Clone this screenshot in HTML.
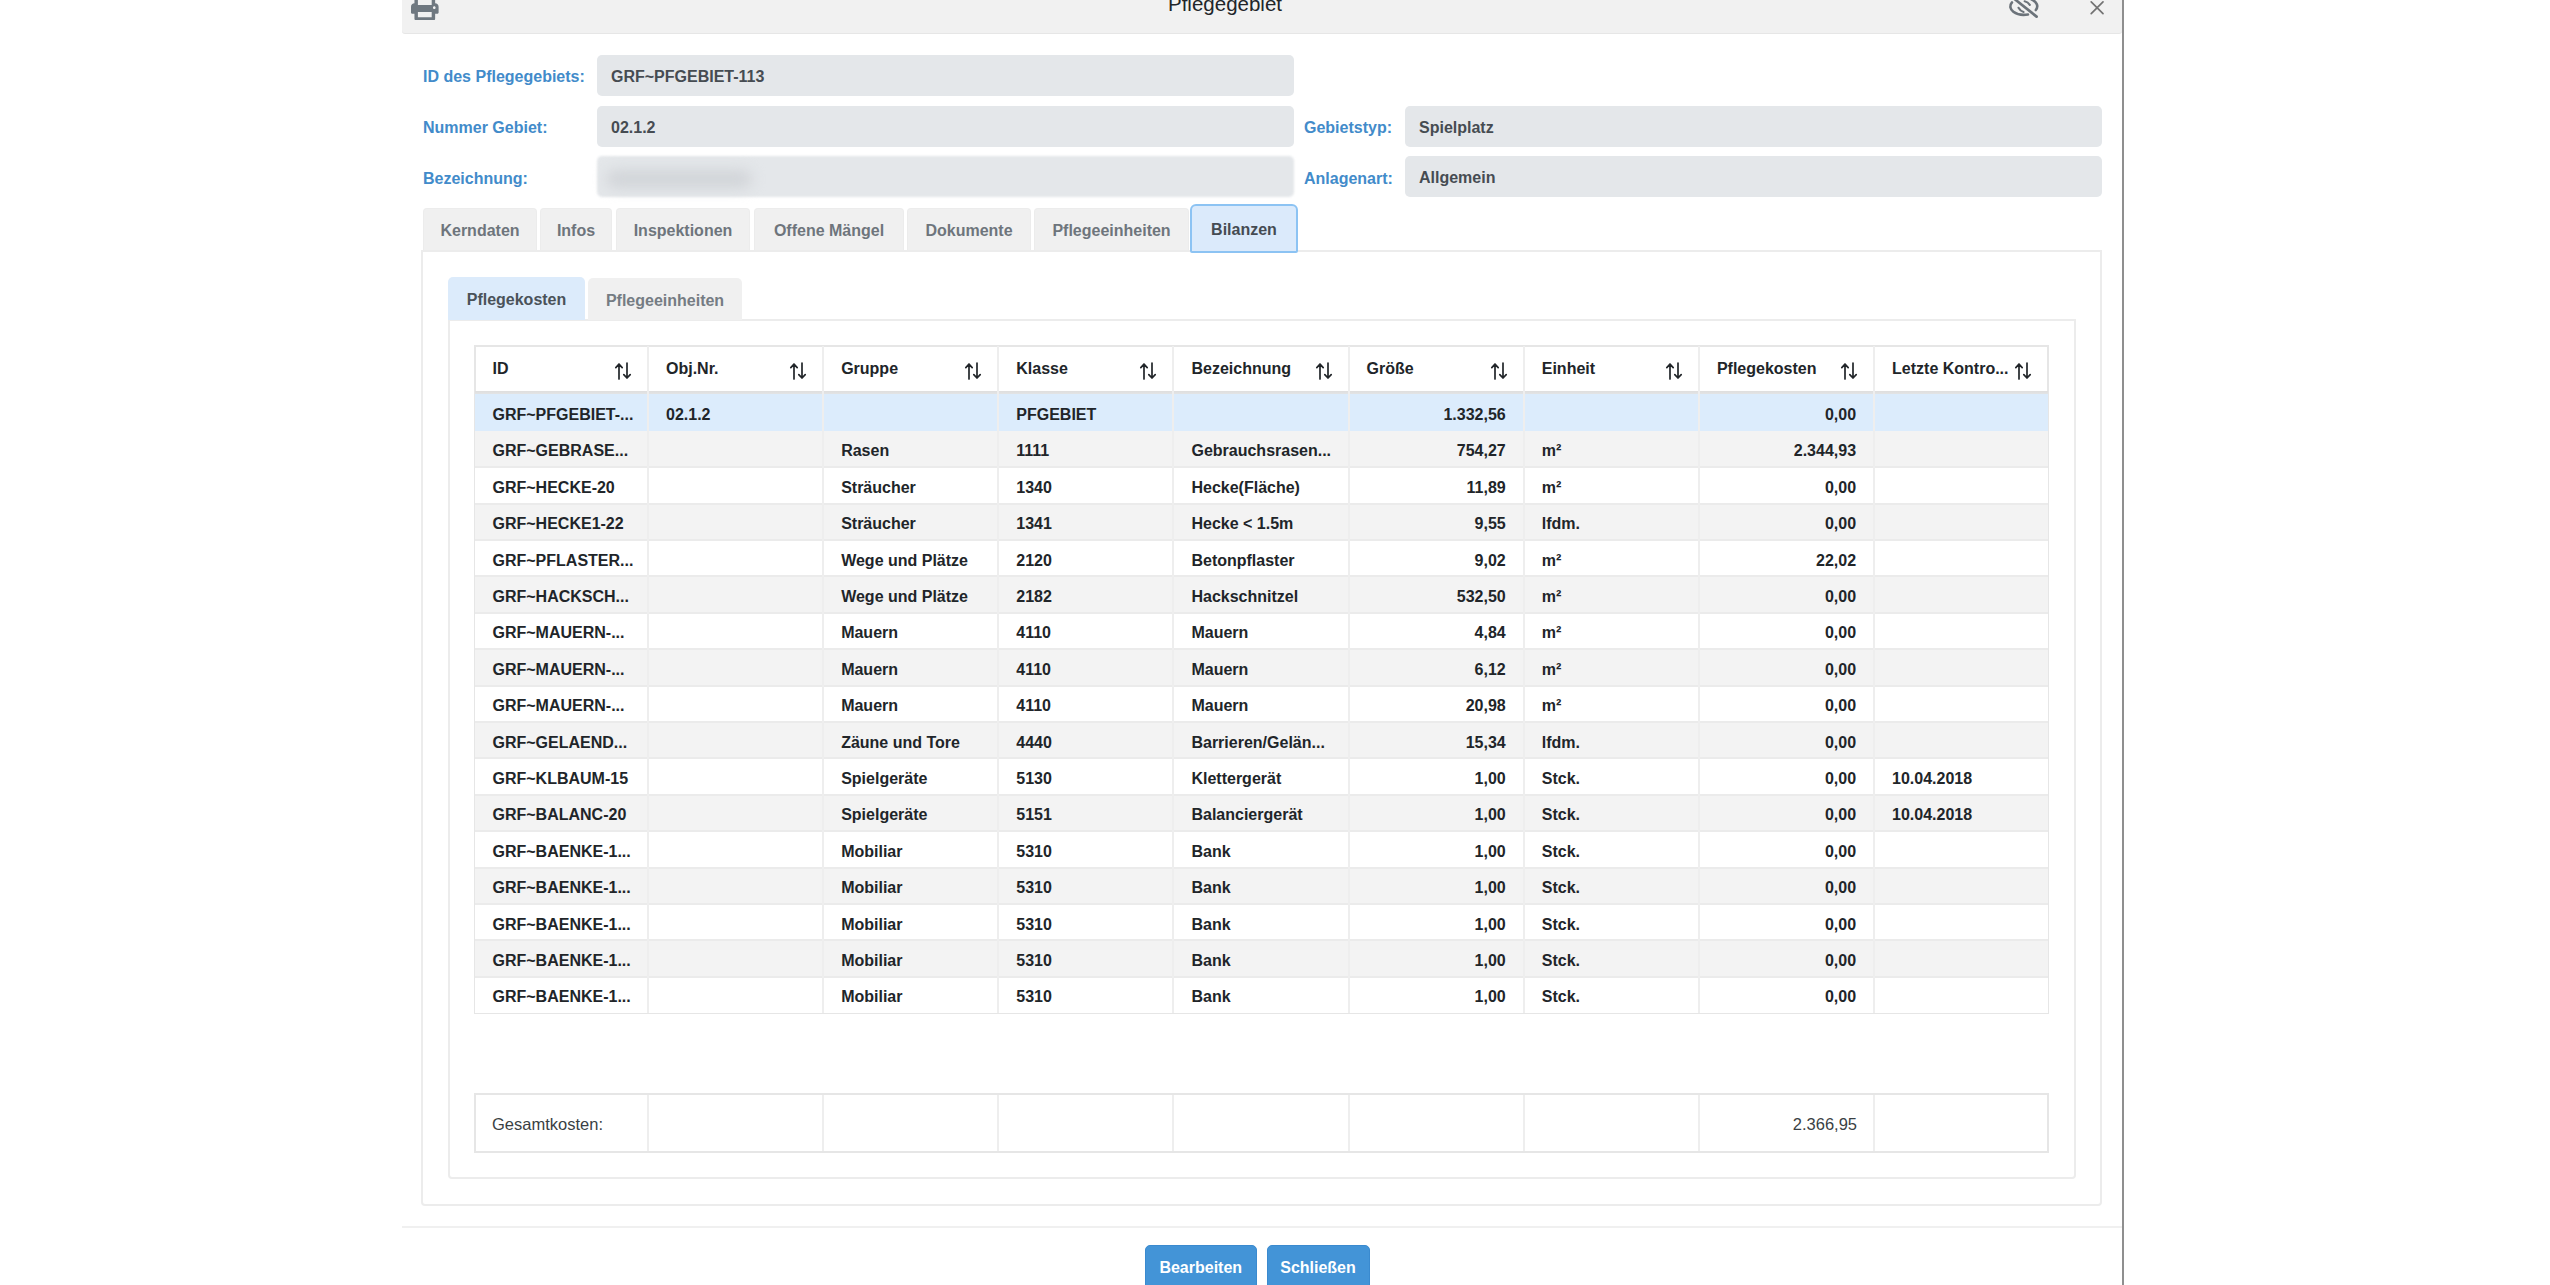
<!DOCTYPE html>
<html><head><meta charset="utf-8"><style>
*{box-sizing:border-box;margin:0;padding:0}
html,body{width:2550px;height:1285px;overflow:hidden;background:#fff;font-family:"Liberation Sans",sans-serif;position:relative}
.abs{position:absolute}
#hdr{position:absolute;left:402px;top:-6px;width:1720px;height:39px;background:#f1f1f1;border-radius:0 0 3px 3px;box-shadow:0 1px 0 #e6e6e6}
#title{position:absolute;left:1168px;top:-8px;font-size:20.5px;color:#212529;white-space:nowrap}
#vbar{position:absolute;left:2122px;top:0;width:1.6px;height:1285px;background:#8f8f8f}
.lbl{position:absolute;margin-top:1px;font-size:16px;font-weight:700;color:#428bca;white-space:nowrap}
.inp{position:absolute;height:41px;background:#e4e7ea;border-radius:5px;font-size:16px;font-weight:700;color:#464c52;padding-left:14px;line-height:43px;white-space:nowrap}
.tab{position:absolute;top:208px;height:42px;background:#f0f0f0;border-radius:4px 4px 0 0;font-size:16px;font-weight:700;color:#6e757c;line-height:43px;text-align:center;white-space:nowrap;border:1px solid #ececec;border-bottom:none}
.tab.act{top:204px;height:49px;background:#dbeafb;border:2px solid #8cc3f3;border-radius:6px 6px 2px 2px;color:#454b52;line-height:47px}
#panel{position:absolute;left:421px;top:250px;width:1681px;height:956px;border:2px solid #ececec;border-radius:0 0 4px 4px}
.itab{position:absolute;height:43px;background:#f0f0f0;border-radius:5px 5px 0 0;font-size:16px;font-weight:700;color:#757c83;line-height:45px;text-align:center;white-space:nowrap}
.itab.act{background:#dcebfb;color:#4a5259}
#ipanel{position:absolute;left:448px;top:319px;width:1628px;height:860px;border:2px solid #ececec;border-top:2px solid #ececec;border-radius:0 0 4px 4px}
#tbl{position:absolute;left:474px;top:345px;width:1575px;height:669px;border:2px solid #e6e6e6}
.th{position:absolute;top:346px;height:46px;font-size:16px;font-weight:700;color:#212529;white-space:nowrap}
.tht{position:absolute;left:18px;top:13.5px}
.sort{position:absolute;right:16px;top:16px;width:18px;height:18px}
#hbot{position:absolute;left:475px;top:391px;width:1573px;height:4px;background:linear-gradient(#dedede,#e4e6e8)}
.tr{position:absolute;left:475px;width:1573px;height:36.4px}
.tr.sel{background:#dcecfc;height:37.4px}
.tr.odd{background:#f3f3f3}
.tr.even{background:#fff}
.td{position:absolute;height:36.4px;line-height:41.8px;font-size:16px;font-weight:700;color:#212529;white-space:nowrap;padding-left:18px}
.td.r{text-align:right;padding-left:0;padding-right:18px}
.vl{position:absolute;width:2px;background:#eeeeee}
.hl{position:absolute;left:475px;width:1573px;height:2px;background:#ebebeb}
#ftbl{position:absolute;left:474px;top:1093px;width:1575px;height:60px;border:2px solid #e6e6e6}
.ft{position:absolute;top:1094px;height:58px;line-height:61px;font-size:16.5px;color:#3a3f44;white-space:nowrap}
#fline{position:absolute;left:402px;top:1226px;width:1720px;height:2px;background:#f0f0f0}
.btn{position:absolute;top:1244.7px;height:46px;background:#4394d7;border:1px solid #3a8acf;border-radius:5px;color:#fff;font-size:16px;font-weight:700;text-align:center;line-height:43.6px}
</style></head><body>
<div id="hdr"></div>
<div id="title">Pflegegebiet</div>
<svg class="abs" style="left:411px;top:-7.2px" width="27.6" height="27.6" viewBox="0 0 512 512"><path fill="#6f7880" d="M448 192V77.25c0-8.49-3.37-16.62-9.37-22.63L393.37 9.37c-6-6-14.14-9.37-22.63-9.37H96C78.33 0 64 14.33 64 32v160c-35.35 0-64 28.650-64 64v112c0 8.84 7.16 16 16 16h48v96c0 17.67 14.33 32 32 32h320c17.67 0 32-14.330 32-32v-96h48c8.84 0 16-7.16 16-16V256c0-35.35-28.65-64-64-64zm-64 256H128v-96h256v96zm0-224H128V64h192v48c0 8.84 7.16 16 16 16h48v96zm48 72c-13.25 0-24-10.75-24-24 0-13.26 10.75-24 24-24s24 10.74 24 24c0 13.25-10.75 24-24 24z"/></svg>
<svg class="abs" style="left:2000px;top:-5px" width="45" height="28" viewBox="2000 -5 45 28"><g fill="none" stroke="#6c737a" stroke-linecap="round">
<path d="M2012 2.4A13.8 8.4 0 0 0 2028 14.5" stroke-width="2.6"/>
<path d="M2031.4 -0.6A13.8 8.4 0 0 1 2035.8 10" stroke-width="2.6"/>
<path d="M2018.5 7.8A8 8 0 0 0 2023.6 11.9" stroke-width="2.1"/>
<path d="M2024.6 1.2A8 8 0 0 1 2029.8 4.9" stroke-width="2.1"/>
<path d="M2014.5 -1L2036.6 16.6" stroke-width="2.7"/>
</g></svg>
<svg class="abs" style="left:2085px;top:-4px" width="24" height="24" viewBox="2085 -4 24 24"><path d="M2091.2 1.8L2103 13.6M2103 1.8L2091.2 13.6" stroke="#737373" stroke-width="1.7" stroke-linecap="round"/></svg>
<div id="vbar"></div>

<div class="lbl" style="left:423px;top:67px">ID des Pflegegebiets:</div>
<div class="inp" style="left:597px;top:55px;width:697px">GRF~PFGEBIET-113</div>
<div class="lbl" style="left:423px;top:118px">Nummer Gebiet:</div>
<div class="inp" style="left:597px;top:106px;width:697px">02.1.2</div>
<div class="lbl" style="left:423px;top:169px">Bezeichnung:</div>
<div class="inp" style="left:597px;top:156px;width:697px;filter:blur(1.2px)"></div><div class="abs" style="left:606px;top:170px;width:146px;height:18px;background:#d1d4d8;border-radius:9px;filter:blur(7px)"></div>
<div class="lbl" style="left:1304px;top:118px">Gebietstyp:</div>
<div class="inp" style="left:1405px;top:106px;width:697px">Spielplatz</div>
<div class="lbl" style="left:1304px;top:169px">Anlagenart:</div>
<div class="inp" style="left:1405px;top:156px;width:697px">Allgemein</div>

<div id="panel"></div>
<div class="tab" style="left:423px;width:114px">Kerndaten</div>
<div class="tab" style="left:540px;width:72px">Infos</div>
<div class="tab" style="left:616px;width:134px">Inspektionen</div>
<div class="tab" style="left:754px;width:150px">Offene Mängel</div>
<div class="tab" style="left:907px;width:124px">Dokumente</div>
<div class="tab" style="left:1034px;width:155px">Pflegeeinheiten</div>
<div class="tab act" style="left:1190px;width:108px">Bilanzen</div>

<div id="ipanel"></div>
<div class="itab act" style="left:448px;top:277px;width:137px">Pflegekosten</div>
<div class="itab" style="left:588px;top:278px;width:154px;height:42px">Pflegeeinheiten</div>

<div id="tbl"></div>
<div class="th" style="left:474.5px;width:173.5px"><span class="tht">ID</span><span class="sort"><svg width="18" height="18" viewBox="0 0 18 18"><path d="M5 17V2M1.8 5.6L5 2.2l3.2 3.4M13 1v15M9.8 12.6L13 16l3.2-3.4" fill="none" stroke="#212529" stroke-width="1.7" stroke-linecap="round" stroke-linejoin="round"/></svg></span></div><div class="th" style="left:648.0px;width:175.14999999999998px"><span class="tht">Obj.Nr.</span><span class="sort"><svg width="18" height="18" viewBox="0 0 18 18"><path d="M5 17V2M1.8 5.6L5 2.2l3.2 3.4M13 1v15M9.8 12.6L13 16l3.2-3.4" fill="none" stroke="#212529" stroke-width="1.7" stroke-linecap="round" stroke-linejoin="round"/></svg></span></div><div class="th" style="left:823.15px;width:175.14999999999998px"><span class="tht">Gruppe</span><span class="sort"><svg width="18" height="18" viewBox="0 0 18 18"><path d="M5 17V2M1.8 5.6L5 2.2l3.2 3.4M13 1v15M9.8 12.6L13 16l3.2-3.4" fill="none" stroke="#212529" stroke-width="1.7" stroke-linecap="round" stroke-linejoin="round"/></svg></span></div><div class="th" style="left:998.3px;width:175.1500000000001px"><span class="tht">Klasse</span><span class="sort"><svg width="18" height="18" viewBox="0 0 18 18"><path d="M5 17V2M1.8 5.6L5 2.2l3.2 3.4M13 1v15M9.8 12.6L13 16l3.2-3.4" fill="none" stroke="#212529" stroke-width="1.7" stroke-linecap="round" stroke-linejoin="round"/></svg></span></div><div class="th" style="left:1173.45px;width:175.14999999999986px"><span class="tht">Bezeichnung</span><span class="sort"><svg width="18" height="18" viewBox="0 0 18 18"><path d="M5 17V2M1.8 5.6L5 2.2l3.2 3.4M13 1v15M9.8 12.6L13 16l3.2-3.4" fill="none" stroke="#212529" stroke-width="1.7" stroke-linecap="round" stroke-linejoin="round"/></svg></span></div><div class="th" style="left:1348.6px;width:175.1500000000001px"><span class="tht">Größe</span><span class="sort"><svg width="18" height="18" viewBox="0 0 18 18"><path d="M5 17V2M1.8 5.6L5 2.2l3.2 3.4M13 1v15M9.8 12.6L13 16l3.2-3.4" fill="none" stroke="#212529" stroke-width="1.7" stroke-linecap="round" stroke-linejoin="round"/></svg></span></div><div class="th" style="left:1523.75px;width:175.1500000000001px"><span class="tht">Einheit</span><span class="sort"><svg width="18" height="18" viewBox="0 0 18 18"><path d="M5 17V2M1.8 5.6L5 2.2l3.2 3.4M13 1v15M9.8 12.6L13 16l3.2-3.4" fill="none" stroke="#212529" stroke-width="1.7" stroke-linecap="round" stroke-linejoin="round"/></svg></span></div><div class="th" style="left:1698.9px;width:175.14999999999986px"><span class="tht">Pflegekosten</span><span class="sort"><svg width="18" height="18" viewBox="0 0 18 18"><path d="M5 17V2M1.8 5.6L5 2.2l3.2 3.4M13 1v15M9.8 12.6L13 16l3.2-3.4" fill="none" stroke="#212529" stroke-width="1.7" stroke-linecap="round" stroke-linejoin="round"/></svg></span></div><div class="th" style="left:1874.05px;width:174.45000000000005px"><span class="tht">Letzte Kontro...</span><span class="sort"><svg width="18" height="18" viewBox="0 0 18 18"><path d="M5 17V2M1.8 5.6L5 2.2l3.2 3.4M13 1v15M9.8 12.6L13 16l3.2-3.4" fill="none" stroke="#212529" stroke-width="1.7" stroke-linecap="round" stroke-linejoin="round"/></svg></span></div>
<div id="hbot"></div>
<div class="tr sel" style="top:394.00px"></div><div class="td" style="left:474.5px;width:173.5px;top:394.00px">GRF~PFGEBIET-...</div><div class="td" style="left:648.0px;width:175.14999999999998px;top:394.00px">02.1.2</div><div class="td" style="left:998.3px;width:175.1500000000001px;top:394.00px">PFGEBIET</div><div class="td r" style="left:1348.6px;width:175.1500000000001px;top:394.00px">1.332,56</div><div class="td r" style="left:1698.9px;width:175.14999999999986px;top:394.00px">0,00</div><div class="tr odd" style="top:431.40px;height:35.4px"></div><div class="td" style="left:474.5px;width:173.5px;top:430.40px">GRF~GEBRASE...</div><div class="td" style="left:823.15px;width:175.14999999999998px;top:430.40px">Rasen</div><div class="td" style="left:998.3px;width:175.1500000000001px;top:430.40px">1111</div><div class="td" style="left:1173.45px;width:175.14999999999986px;top:430.40px">Gebrauchsrasen...</div><div class="td r" style="left:1348.6px;width:175.1500000000001px;top:430.40px">754,27</div><div class="td" style="left:1523.75px;width:175.1500000000001px;top:430.40px">m²</div><div class="td r" style="left:1698.9px;width:175.14999999999986px;top:430.40px">2.344,93</div><div class="tr even" style="top:466.80px"></div><div class="td" style="left:474.5px;width:173.5px;top:466.80px">GRF~HECKE-20</div><div class="td" style="left:823.15px;width:175.14999999999998px;top:466.80px">Sträucher</div><div class="td" style="left:998.3px;width:175.1500000000001px;top:466.80px">1340</div><div class="td" style="left:1173.45px;width:175.14999999999986px;top:466.80px">Hecke(Fläche)</div><div class="td r" style="left:1348.6px;width:175.1500000000001px;top:466.80px">11,89</div><div class="td" style="left:1523.75px;width:175.1500000000001px;top:466.80px">m²</div><div class="td r" style="left:1698.9px;width:175.14999999999986px;top:466.80px">0,00</div><div class="tr odd" style="top:503.20px"></div><div class="td" style="left:474.5px;width:173.5px;top:503.20px">GRF~HECKE1-22</div><div class="td" style="left:823.15px;width:175.14999999999998px;top:503.20px">Sträucher</div><div class="td" style="left:998.3px;width:175.1500000000001px;top:503.20px">1341</div><div class="td" style="left:1173.45px;width:175.14999999999986px;top:503.20px">Hecke &lt; 1.5m</div><div class="td r" style="left:1348.6px;width:175.1500000000001px;top:503.20px">9,55</div><div class="td" style="left:1523.75px;width:175.1500000000001px;top:503.20px">lfdm.</div><div class="td r" style="left:1698.9px;width:175.14999999999986px;top:503.20px">0,00</div><div class="tr even" style="top:539.60px"></div><div class="td" style="left:474.5px;width:173.5px;top:539.60px">GRF~PFLASTER...</div><div class="td" style="left:823.15px;width:175.14999999999998px;top:539.60px">Wege und Plätze</div><div class="td" style="left:998.3px;width:175.1500000000001px;top:539.60px">2120</div><div class="td" style="left:1173.45px;width:175.14999999999986px;top:539.60px">Betonpflaster</div><div class="td r" style="left:1348.6px;width:175.1500000000001px;top:539.60px">9,02</div><div class="td" style="left:1523.75px;width:175.1500000000001px;top:539.60px">m²</div><div class="td r" style="left:1698.9px;width:175.14999999999986px;top:539.60px">22,02</div><div class="tr odd" style="top:576.00px"></div><div class="td" style="left:474.5px;width:173.5px;top:576.00px">GRF~HACKSCH...</div><div class="td" style="left:823.15px;width:175.14999999999998px;top:576.00px">Wege und Plätze</div><div class="td" style="left:998.3px;width:175.1500000000001px;top:576.00px">2182</div><div class="td" style="left:1173.45px;width:175.14999999999986px;top:576.00px">Hackschnitzel</div><div class="td r" style="left:1348.6px;width:175.1500000000001px;top:576.00px">532,50</div><div class="td" style="left:1523.75px;width:175.1500000000001px;top:576.00px">m²</div><div class="td r" style="left:1698.9px;width:175.14999999999986px;top:576.00px">0,00</div><div class="tr even" style="top:612.40px"></div><div class="td" style="left:474.5px;width:173.5px;top:612.40px">GRF~MAUERN-...</div><div class="td" style="left:823.15px;width:175.14999999999998px;top:612.40px">Mauern</div><div class="td" style="left:998.3px;width:175.1500000000001px;top:612.40px">4110</div><div class="td" style="left:1173.45px;width:175.14999999999986px;top:612.40px">Mauern</div><div class="td r" style="left:1348.6px;width:175.1500000000001px;top:612.40px">4,84</div><div class="td" style="left:1523.75px;width:175.1500000000001px;top:612.40px">m²</div><div class="td r" style="left:1698.9px;width:175.14999999999986px;top:612.40px">0,00</div><div class="tr odd" style="top:648.80px"></div><div class="td" style="left:474.5px;width:173.5px;top:648.80px">GRF~MAUERN-...</div><div class="td" style="left:823.15px;width:175.14999999999998px;top:648.80px">Mauern</div><div class="td" style="left:998.3px;width:175.1500000000001px;top:648.80px">4110</div><div class="td" style="left:1173.45px;width:175.14999999999986px;top:648.80px">Mauern</div><div class="td r" style="left:1348.6px;width:175.1500000000001px;top:648.80px">6,12</div><div class="td" style="left:1523.75px;width:175.1500000000001px;top:648.80px">m²</div><div class="td r" style="left:1698.9px;width:175.14999999999986px;top:648.80px">0,00</div><div class="tr even" style="top:685.20px"></div><div class="td" style="left:474.5px;width:173.5px;top:685.20px">GRF~MAUERN-...</div><div class="td" style="left:823.15px;width:175.14999999999998px;top:685.20px">Mauern</div><div class="td" style="left:998.3px;width:175.1500000000001px;top:685.20px">4110</div><div class="td" style="left:1173.45px;width:175.14999999999986px;top:685.20px">Mauern</div><div class="td r" style="left:1348.6px;width:175.1500000000001px;top:685.20px">20,98</div><div class="td" style="left:1523.75px;width:175.1500000000001px;top:685.20px">m²</div><div class="td r" style="left:1698.9px;width:175.14999999999986px;top:685.20px">0,00</div><div class="tr odd" style="top:721.60px"></div><div class="td" style="left:474.5px;width:173.5px;top:721.60px">GRF~GELAEND...</div><div class="td" style="left:823.15px;width:175.14999999999998px;top:721.60px">Zäune und Tore</div><div class="td" style="left:998.3px;width:175.1500000000001px;top:721.60px">4440</div><div class="td" style="left:1173.45px;width:175.14999999999986px;top:721.60px">Barrieren/Gelän...</div><div class="td r" style="left:1348.6px;width:175.1500000000001px;top:721.60px">15,34</div><div class="td" style="left:1523.75px;width:175.1500000000001px;top:721.60px">lfdm.</div><div class="td r" style="left:1698.9px;width:175.14999999999986px;top:721.60px">0,00</div><div class="tr even" style="top:758.00px"></div><div class="td" style="left:474.5px;width:173.5px;top:758.00px">GRF~KLBAUM-15</div><div class="td" style="left:823.15px;width:175.14999999999998px;top:758.00px">Spielgeräte</div><div class="td" style="left:998.3px;width:175.1500000000001px;top:758.00px">5130</div><div class="td" style="left:1173.45px;width:175.14999999999986px;top:758.00px">Klettergerät</div><div class="td r" style="left:1348.6px;width:175.1500000000001px;top:758.00px">1,00</div><div class="td" style="left:1523.75px;width:175.1500000000001px;top:758.00px">Stck.</div><div class="td r" style="left:1698.9px;width:175.14999999999986px;top:758.00px">0,00</div><div class="td" style="left:1874.05px;width:174.45000000000005px;top:758.00px">10.04.2018</div><div class="tr odd" style="top:794.40px"></div><div class="td" style="left:474.5px;width:173.5px;top:794.40px">GRF~BALANC-20</div><div class="td" style="left:823.15px;width:175.14999999999998px;top:794.40px">Spielgeräte</div><div class="td" style="left:998.3px;width:175.1500000000001px;top:794.40px">5151</div><div class="td" style="left:1173.45px;width:175.14999999999986px;top:794.40px">Balanciergerät</div><div class="td r" style="left:1348.6px;width:175.1500000000001px;top:794.40px">1,00</div><div class="td" style="left:1523.75px;width:175.1500000000001px;top:794.40px">Stck.</div><div class="td r" style="left:1698.9px;width:175.14999999999986px;top:794.40px">0,00</div><div class="td" style="left:1874.05px;width:174.45000000000005px;top:794.40px">10.04.2018</div><div class="tr even" style="top:830.80px"></div><div class="td" style="left:474.5px;width:173.5px;top:830.80px">GRF~BAENKE-1...</div><div class="td" style="left:823.15px;width:175.14999999999998px;top:830.80px">Mobiliar</div><div class="td" style="left:998.3px;width:175.1500000000001px;top:830.80px">5310</div><div class="td" style="left:1173.45px;width:175.14999999999986px;top:830.80px">Bank</div><div class="td r" style="left:1348.6px;width:175.1500000000001px;top:830.80px">1,00</div><div class="td" style="left:1523.75px;width:175.1500000000001px;top:830.80px">Stck.</div><div class="td r" style="left:1698.9px;width:175.14999999999986px;top:830.80px">0,00</div><div class="tr odd" style="top:867.20px"></div><div class="td" style="left:474.5px;width:173.5px;top:867.20px">GRF~BAENKE-1...</div><div class="td" style="left:823.15px;width:175.14999999999998px;top:867.20px">Mobiliar</div><div class="td" style="left:998.3px;width:175.1500000000001px;top:867.20px">5310</div><div class="td" style="left:1173.45px;width:175.14999999999986px;top:867.20px">Bank</div><div class="td r" style="left:1348.6px;width:175.1500000000001px;top:867.20px">1,00</div><div class="td" style="left:1523.75px;width:175.1500000000001px;top:867.20px">Stck.</div><div class="td r" style="left:1698.9px;width:175.14999999999986px;top:867.20px">0,00</div><div class="tr even" style="top:903.60px"></div><div class="td" style="left:474.5px;width:173.5px;top:903.60px">GRF~BAENKE-1...</div><div class="td" style="left:823.15px;width:175.14999999999998px;top:903.60px">Mobiliar</div><div class="td" style="left:998.3px;width:175.1500000000001px;top:903.60px">5310</div><div class="td" style="left:1173.45px;width:175.14999999999986px;top:903.60px">Bank</div><div class="td r" style="left:1348.6px;width:175.1500000000001px;top:903.60px">1,00</div><div class="td" style="left:1523.75px;width:175.1500000000001px;top:903.60px">Stck.</div><div class="td r" style="left:1698.9px;width:175.14999999999986px;top:903.60px">0,00</div><div class="tr odd" style="top:940.00px"></div><div class="td" style="left:474.5px;width:173.5px;top:940.00px">GRF~BAENKE-1...</div><div class="td" style="left:823.15px;width:175.14999999999998px;top:940.00px">Mobiliar</div><div class="td" style="left:998.3px;width:175.1500000000001px;top:940.00px">5310</div><div class="td" style="left:1173.45px;width:175.14999999999986px;top:940.00px">Bank</div><div class="td r" style="left:1348.6px;width:175.1500000000001px;top:940.00px">1,00</div><div class="td" style="left:1523.75px;width:175.1500000000001px;top:940.00px">Stck.</div><div class="td r" style="left:1698.9px;width:175.14999999999986px;top:940.00px">0,00</div><div class="tr even" style="top:976.40px"></div><div class="td" style="left:474.5px;width:173.5px;top:976.40px">GRF~BAENKE-1...</div><div class="td" style="left:823.15px;width:175.14999999999998px;top:976.40px">Mobiliar</div><div class="td" style="left:998.3px;width:175.1500000000001px;top:976.40px">5310</div><div class="td" style="left:1173.45px;width:175.14999999999986px;top:976.40px">Bank</div><div class="td r" style="left:1348.6px;width:175.1500000000001px;top:976.40px">1,00</div><div class="td" style="left:1523.75px;width:175.1500000000001px;top:976.40px">Stck.</div><div class="td r" style="left:1698.9px;width:175.14999999999986px;top:976.40px">0,00</div>
<div class="hl" style="top:466.20px"></div><div class="hl" style="top:502.60px"></div><div class="hl" style="top:539.00px"></div><div class="hl" style="top:575.40px"></div><div class="hl" style="top:611.80px"></div><div class="hl" style="top:648.20px"></div><div class="hl" style="top:684.60px"></div><div class="hl" style="top:721.00px"></div><div class="hl" style="top:757.40px"></div><div class="hl" style="top:793.80px"></div><div class="hl" style="top:830.20px"></div><div class="hl" style="top:866.60px"></div><div class="hl" style="top:903.00px"></div><div class="hl" style="top:939.40px"></div><div class="hl" style="top:975.80px"></div>
<div class="vl" style="left:647.0px;top:346px;height:667px"></div><div class="vl" style="left:647.0px;top:1094px;height:58px"></div><div class="vl" style="left:822.15px;top:346px;height:667px"></div><div class="vl" style="left:822.15px;top:1094px;height:58px"></div><div class="vl" style="left:997.3px;top:346px;height:667px"></div><div class="vl" style="left:997.3px;top:1094px;height:58px"></div><div class="vl" style="left:1172.45px;top:346px;height:667px"></div><div class="vl" style="left:1172.45px;top:1094px;height:58px"></div><div class="vl" style="left:1347.6px;top:346px;height:667px"></div><div class="vl" style="left:1347.6px;top:1094px;height:58px"></div><div class="vl" style="left:1522.75px;top:346px;height:667px"></div><div class="vl" style="left:1522.75px;top:1094px;height:58px"></div><div class="vl" style="left:1697.9px;top:346px;height:667px"></div><div class="vl" style="left:1697.9px;top:1094px;height:58px"></div><div class="vl" style="left:1873.05px;top:346px;height:667px"></div><div class="vl" style="left:1873.05px;top:1094px;height:58px"></div>

<div id="ftbl"></div>
<div class="ft" style="left:492px">Gesamtkosten:</div>
<div class="ft" style="left:1698.9px;width:175.14999999999986px;text-align:right;padding-right:17px">2.366,95</div>

<div id="fline"></div>
<div class="btn" style="left:1144.5px;width:112.5px">Bearbeiten</div>
<div class="btn" style="left:1266.5px;width:103px">Schließen</div>
</body></html>
